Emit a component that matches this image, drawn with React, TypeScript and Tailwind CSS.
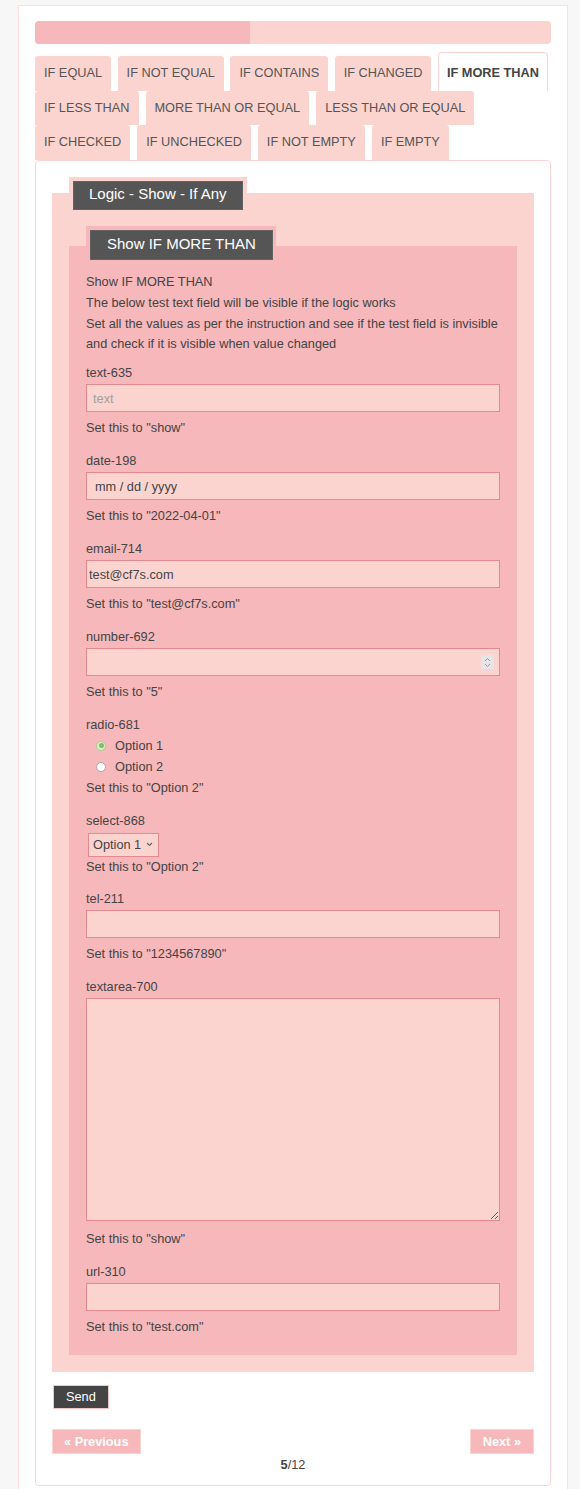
import React from "react";

const FONT = { fontFamily: '"Liberation Sans", Arial, Helvetica, sans-serif' };

function Tab({ label, active = false }: { label: string; active?: boolean }) {
  if (active) {
    return (
      <div className="h-[39px] shrink-0 whitespace-nowrap rounded-t-[4px] border border-b-0 border-[#fbd5d3] bg-white px-[8px] pt-[9px] text-[12.75px] font-bold leading-[21px] text-[#444]">
        {label}
      </div>
    );
  }
  return (
    <div className="h-full shrink-0 whitespace-nowrap rounded-t-[3px] bg-[#fbd4d0] px-[9px] pt-[6px] text-[12.75px] leading-[21px] text-[#555]">
      {label}
    </div>
  );
}

function Field({
  label,
  desc,
  children,
  last = false,
}: {
  label: string;
  desc: string;
  children: React.ReactNode;
  last?: boolean;
}) {
  return (
    <div className={last ? "" : "mb-[12px]"}>
      <div className="leading-[21px]">{label}</div>
      {children}
      <div className="mt-[5px] leading-[21px]">{desc}</div>
    </div>
  );
}

const inputCls =
  "mt-px block h-[28px] w-full border border-[#e4898f] bg-[#fbd4d0] text-[12.75px] text-[#444] outline-none";

function Radio({ checked }: { checked: boolean }) {
  if (checked) {
    return (
      <span className="flex h-[10px] w-[10px] items-center justify-center rounded-full border border-[#a9cf91] bg-[#d9edc9]">
        <span className="h-[5px] w-[5px] rounded-full bg-[#7fbf5f]" />
      </span>
    );
  }
  return <span className="block h-[10px] w-[10px] rounded-full border border-[#a8a8a8] bg-white" />;
}

export default function App() {
  return (
    <div className="h-[1489px] overflow-hidden bg-[#f7f7f7] pt-[5px] text-[12.75px] text-[#444]" style={FONT}>
      <div className="ml-[18px] min-h-[1500px] w-[550px] border border-[#fde0de] bg-white px-[16px] pt-[15px]">
        {/* progress bar */}
        <div className="flex h-[23px] w-full overflow-hidden rounded-[4px] bg-[#fbd4d0]">
          <div className="h-full bg-[#f6b8ba]" style={{ width: `${(5 / 12) * 100}%` }} />
        </div>

        {/* tabs */}
        <div className="mt-[8px]">
          <div className="flex h-[39px] items-end gap-x-[6.5px]">
            <div className="h-[35px] shrink-0"><Tab label="IF EQUAL" /></div>
            <div className="h-[35px] shrink-0"><Tab label="IF NOT EQUAL" /></div>
            <div className="h-[35px] shrink-0"><Tab label="IF CONTAINS" /></div>
            <div className="h-[35px] shrink-0"><Tab label="IF CHANGED" /></div>
            <Tab label="IF MORE THAN" active />
          </div>
          <div className="flex h-[34px] gap-x-[7px]">
            <Tab label="IF LESS THAN" />
            <Tab label="MORE THAN OR EQUAL" />
            <Tab label="LESS THAN OR EQUAL" />
          </div>
          <div className="flex h-[35px] gap-x-[7px]">
            <Tab label="IF CHECKED" />
            <Tab label="IF UNCHECKED" />
            <Tab label="IF NOT EMPTY" />
            <Tab label="IF EMPTY" />
          </div>
        </div>

        {/* panel */}
        <div className="rounded-[4px] border border-[#fbd5d3] px-[16px] pb-[10px] pt-[16px]">
          {/* outer fieldset */}
          <div>
            <div className="flex">
              <div className="relative ml-[17px] bg-[#fbd4d0] px-[4px] pt-[4px]">
                <div className="h-[29px] border border-[#626262] bg-[#555] px-[15px] text-[15px] leading-[24px] text-white">
                  Logic - Show - If Any
                </div>
              </div>
            </div>
            <div className="-mt-[17px] bg-[#fbd4d0] px-[17px] pb-[17px] pt-[33px]">
              {/* inner fieldset */}
              <div className="flex">
                <div className="relative ml-[17px] bg-[#f6b8ba] pl-[4px] pr-[3px] pt-[4px]">
                  <div className="h-[30px] border border-[#626262] bg-[#555] px-[16px] text-[15px] leading-[25px] text-white">
                    Show IF MORE THAN
                  </div>
                </div>
              </div>
              <div className="-mt-[14px] bg-[#f6b8ba] px-[17px] pb-[18px] pt-[26px]">
                <p className="mb-[7px] whitespace-nowrap leading-[20.8px]">
                  Show IF MORE THAN
                  <br />
                  The below test text field will be visible if the logic works
                  <br />
                  Set all the values as per the instruction and see if the test field is invisible
                  <br />
                  and check if it is visible when value changed
                </p>

                <Field label="text-635" desc={'Set this to "show"'}>
                  <input type="text" placeholder="text" className={`${inputCls} px-[6px] placeholder:text-[#a0a0a0]`} />
                </Field>

                <Field label="date-198" desc={'Set this to "2022-04-01"'}>
                  <div className={`${inputCls} flex items-center pl-[8px]`}>mm / dd / yyyy</div>
                </Field>

                <Field label="email-714" desc={'Set this to "test@cf7s.com"'}>
                  <input type="email" defaultValue="test@cf7s.com" className={`${inputCls} px-[2px]`} />
                </Field>

                <Field label="number-692" desc={'Set this to "5"'}>
                  <div className={`${inputCls} flex items-center justify-end pr-[5px]`}>
                    <span className="flex h-[14px] w-[13px] items-center justify-center bg-[#e7e4e8]">
                      <svg width="7" height="11" viewBox="0 0 7 11" fill="none" stroke="#9a9a9a" strokeWidth="1">
                        <path d="M1 4 L3.5 1.5 L6 4" />
                        <path d="M1 7 L3.5 9.5 L6 7" />
                      </svg>
                    </span>
                  </div>
                </Field>

                {/* radio */}
                <div className="mb-[12px]">
                  <div className="leading-[21px]">radio-681</div>
                  <div className="flex h-[21px] items-center pl-[10px]">
                    <Radio checked />
                    <span className="ml-[9px]">Option 1</span>
                  </div>
                  <div className="flex h-[21px] items-center pl-[10px]">
                    <Radio checked={false} />
                    <span className="ml-[9px]">Option 2</span>
                  </div>
                  <div className="leading-[21px]">Set this to "Option 2"</div>
                </div>

                {/* select */}
                <div className="mb-[11px]">
                  <div className="leading-[21px]">select-868</div>
                  <div className="ml-[2px] mt-[2px] flex h-[24px] w-[71px] items-center border border-[#e4898f] bg-[#fbd4d0] pb-[2px] pl-[4px] pr-[5px]">
                    <span className="flex-1">Option 1</span>
                    <svg width="7" height="5" viewBox="0 0 7 5" fill="none" stroke="#666" strokeWidth="1.2">
                      <path d="M1 1 L3.5 3.5 L6 1" />
                    </svg>
                  </div>
                  <div className="-mt-px leading-[21px]">Set this to "Option 2"</div>
                </div>

                <Field label="tel-211" desc={'Set this to "1234567890"'}>
                  <input type="tel" className={`${inputCls} px-[6px]`} />
                </Field>

                <div className="mb-[12px]">
                  <div className="leading-[21px]">textarea-700</div>
                  <textarea className="mt-px block h-[223px] w-full border border-[#e4898f] bg-[#fbd4d0] px-[6px] text-[12.75px] outline-none" />
                  <div className="mt-[7px] leading-[21px]">Set this to "show"</div>
                </div>

                <Field label="url-310" desc={'Set this to "test.com"'} last>
                  <input type="url" className={`${inputCls} px-[6px]`} />
                </Field>
              </div>
            </div>
          </div>

          {/* send */}
          <div className="mt-[13px] pl-px">
            <button className="h-[24px] border border-[#f3c4c4] bg-[#444] px-[12px] text-[12.75px] leading-[20px] text-white">
              Send
            </button>
          </div>

          {/* prev / next */}
          <div className="mt-[20px] flex items-center justify-between">
            <button className="h-[25px] border border-[#fbd4d0] bg-[#f6b8ba] px-[11px] text-[12.75px] font-bold leading-[21px] text-white">
              « Previous
            </button>
            <button className="h-[25px] border border-[#fbd4d0] bg-[#f6b8ba] px-[12px] text-[12.75px] font-bold leading-[21px] text-white">
              Next »
            </button>
          </div>
          <div className="text-center leading-[21px]">
            <span className="font-bold">5</span>/12
          </div>
        </div>
      </div>
    </div>
  );
}
